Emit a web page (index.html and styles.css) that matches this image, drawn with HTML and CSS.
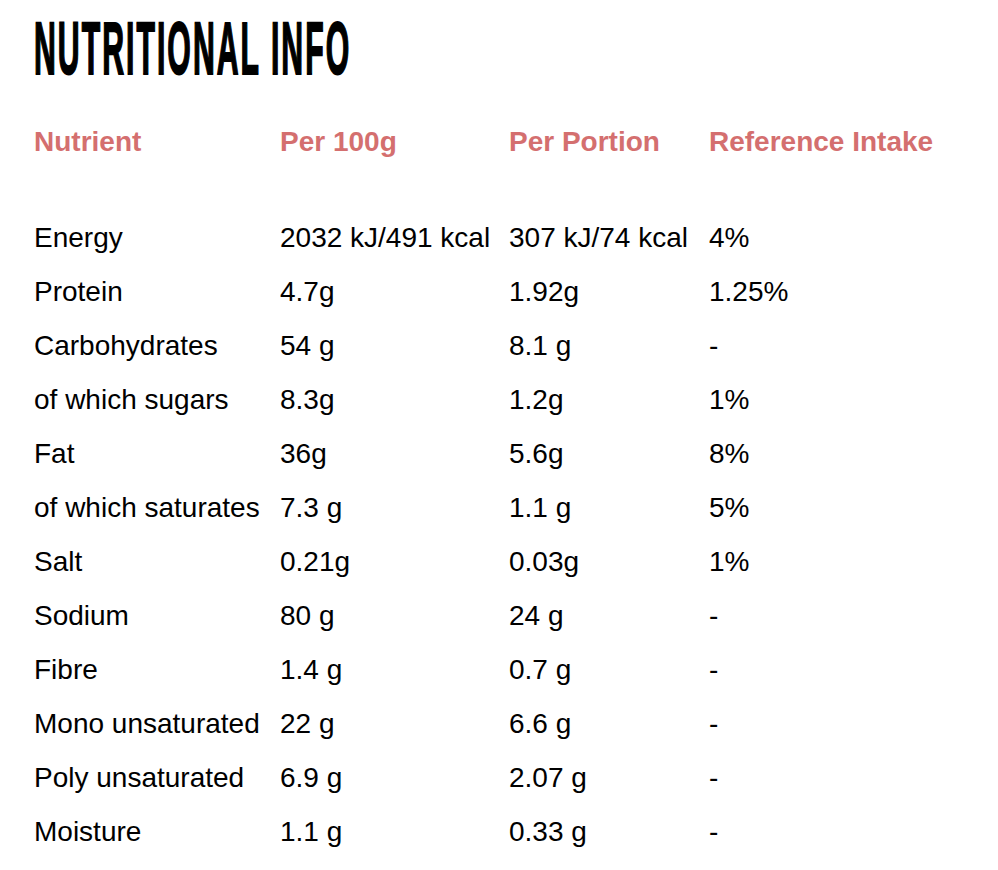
FILE: index.html
```html
<!DOCTYPE html>
<html lang="en">
<head>
<meta charset="utf-8">
<title>Nutritional Info</title>
<link rel="stylesheet" href="styles.css">
</head>
<body>
<main class="page">
  <h1 class="title">NUTRITIONAL INFO</h1>
  <div class="table">
    <div class="row head">
      <div>Nutrient</div><div>Per 100g</div><div>Per Portion</div><div>Reference Intake</div>
    </div>
    <div class="body">
      <div class="row"><div>Energy</div><div>2032 kJ/491 kcal</div><div>307 kJ/74 kcal</div><div>4%</div></div>
      <div class="row"><div>Protein</div><div>4.7g</div><div>1.92g</div><div>1.25%</div></div>
      <div class="row"><div>Carbohydrates</div><div>54 g</div><div>8.1 g</div><div>-</div></div>
      <div class="row"><div>of which sugars</div><div>8.3g</div><div>1.2g</div><div>1%</div></div>
      <div class="row"><div>Fat</div><div>36g</div><div>5.6g</div><div>8%</div></div>
      <div class="row"><div>of which saturates</div><div>7.3 g</div><div>1.1 g</div><div>5%</div></div>
      <div class="row"><div>Salt</div><div>0.21g</div><div>0.03g</div><div>1%</div></div>
      <div class="row"><div>Sodium</div><div>80 g</div><div>24 g</div><div>-</div></div>
      <div class="row"><div>Fibre</div><div>1.4 g</div><div>0.7 g</div><div>-</div></div>
      <div class="row"><div>Mono unsaturated</div><div>22 g</div><div>6.6 g</div><div>-</div></div>
      <div class="row"><div>Poly unsaturated</div><div>6.9 g</div><div>2.07 g</div><div>-</div></div>
      <div class="row"><div>Moisture</div><div>1.1 g</div><div>0.33 g</div><div>-</div></div>
    </div>
  </div>
</main>
</body>
</html>
```

FILE: styles.css
```css
html, body {
  margin: 0;
  padding: 0;
  background: #ffffff;
}

.page {
  padding: 16px 0 0 34px;
  font-family: "Liberation Sans", Arial, sans-serif;
  color: #000000;
}

.title {
  margin: 0;
  height: 68px;
  font-family: "Liberation Sans", Arial, sans-serif;
  font-weight: bold;
  font-size: 74px;
  line-height: 66px;
  letter-spacing: 5px;
  white-space: nowrap;
  color: #000000;
  -webkit-text-stroke: 2px #000000;
  transform: scaleX(0.408);
  transform-origin: left center;
}

.table {
  margin-top: 31px;
  font-size: 28px;
}

.row {
  display: grid;
  grid-template-columns: 246px 229px 200px auto;
  height: 54px;
  line-height: 54px;
  white-space: nowrap;
}

.head {
  color: #d46f6f;
  font-weight: bold;
}

.body {
  margin-top: 42px;
}
```
